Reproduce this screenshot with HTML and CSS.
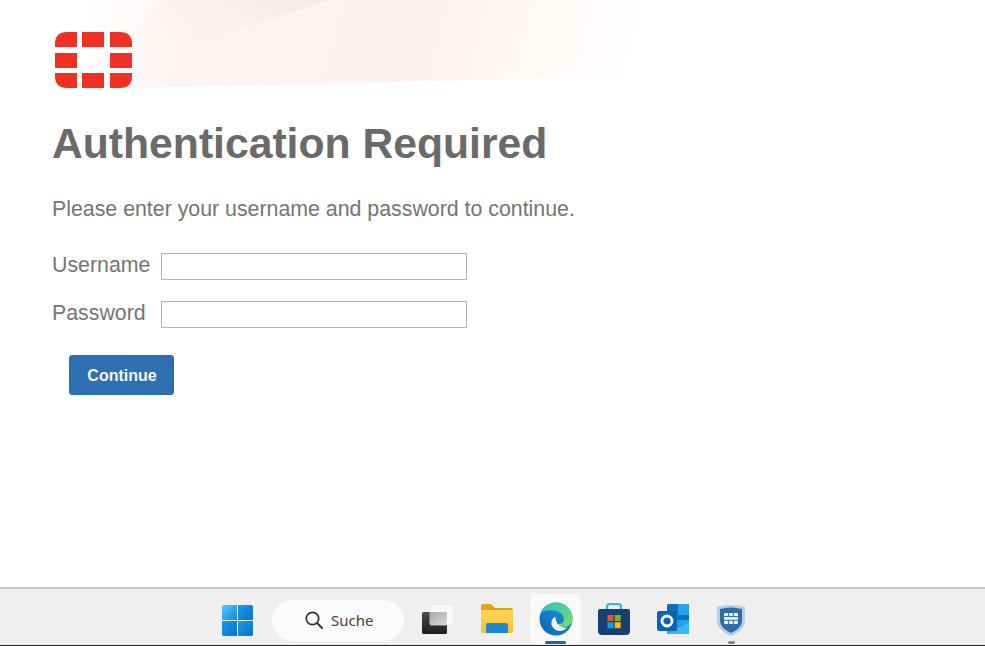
FILE: index.html
```html
<!DOCTYPE html>
<html lang="en">
<head>
<meta charset="utf-8">
<title>Authentication Required</title>
<link rel="stylesheet" href="styles.css">
</head>
<body>
<div class="screen">
  <main class="page">
    <svg class="banner" width="660" height="90" viewBox="0 0 660 90" aria-hidden="true">
      <defs>
        <linearGradient id="fadeA" x1="0" y1="0" x2="1" y2="0.04">
          <stop offset="0" stop-color="#fdf0ee" stop-opacity="0"/>
          <stop offset="0.22" stop-color="#fcf1ef" stop-opacity="0.8"/>
          <stop offset="0.62" stop-color="#fef2f0"/>
          <stop offset="0.82" stop-color="#fff9f7"/>
          <stop offset="1" stop-color="#ffffff"/>
        </linearGradient>
        <linearGradient id="fadeB" x1="0" y1="0.6" x2="1" y2="0">
          <stop offset="0" stop-color="#fdf5f3" stop-opacity="0"/>
          <stop offset="0.55" stop-color="#faf0ee"/>
          <stop offset="1" stop-color="#f7e9e6"/>
        </linearGradient>
      </defs>
      <polygon points="85,0 650,0 650,76 130,88 85,88" fill="url(#fadeA)"/>
      <polygon points="165,0 330,0 135,62 125,36" fill="url(#fadeB)"/>
    </svg>
    <svg class="logo" width="77" height="56" viewBox="0 0 77 56" aria-label="Fortinet logo" role="img">
      <g fill="#ee3124">
        <path d="M0 15V12Q0 0 12 0H22V15Z"/>
        <rect x="27" y="0" width="22" height="15"/>
        <path d="M55 0H65Q77 0 77 12V15H55Z"/>
        <rect x="0" y="21" width="22" height="15"/>
        <rect x="55" y="21" width="22" height="15"/>
        <path d="M0 41H22V56H12Q0 56 0 44Z"/>
        <rect x="27" y="41" width="22" height="15"/>
        <path d="M55 41H77V44Q77 56 65 56H55Z"/>
      </g>
    </svg>
    <h1 class="title">Authentication Required</h1>
    <p class="intro">Please enter your username and password to continue.</p>
    <form class="form">
      <div class="field">
        <label class="label" for="user">Username</label>
        <input class="input" id="user" type="text">
      </div>
      <div class="field">
        <label class="label" for="pass">Password</label>
        <input class="input" id="pass" type="password">
      </div>
      <button class="continue" type="button">Continue</button>
    </form>
  </main>
  <footer class="taskbar">
    <div class="task-icons">
      <svg class="icon" width="31" height="31" viewBox="2 2 28 28" aria-hidden="true">
        <defs>
          <linearGradient id="winA" x1="0" y1="0" x2="1" y2="1"><stop offset="0" stop-color="#52cdfb"/><stop offset="1" stop-color="#1186dc"/></linearGradient>
          <linearGradient id="winB" x1="0" y1="0" x2="1" y2="1"><stop offset="0" stop-color="#1c9be8"/><stop offset="1" stop-color="#0672cc"/></linearGradient>
        </defs>
        <path d="M2 3.500Q2 2 3.500 2H15.500V15.500H2Z" fill="url(#winA)"/>
        <path d="M16.500 2H28.500Q30 2 30 3.500V15.500H16.500Z" fill="url(#winB)"/>
        <path d="M2 16.500H15.500V30H3.500Q2 30 2 28.500Z" fill="url(#winB)"/>
        <path d="M16.500 16.500H30V28.500Q30 30 28.500 30H16.500Z" fill="url(#winB)"/>
      </svg>
      <div class="search">
        <svg width="20" height="20" viewBox="0 0 20 20" aria-hidden="true">
          <circle cx="8.500" cy="8.500" r="6.200" fill="none" stroke="#333" stroke-width="1.700"/>
          <path d="M13 13L18 18" stroke="#333" stroke-width="2" stroke-linecap="round"/>
        </svg>
        <span class="search-text">Suche</span>
      </div>
      <svg class="icon gap-s" width="36" height="36" viewBox="0 1 36 36" aria-hidden="true">
        <defs>
          <linearGradient id="tvA" x1="0" y1="0" x2="0" y2="1"><stop offset="0" stop-color="#4b4b4b"/><stop offset="1" stop-color="#1c1c1c"/></linearGradient>
          <linearGradient id="tvB" x1="0" y1="0" x2="1" y2="1"><stop offset="0" stop-color="#a8a8a8"/><stop offset="1" stop-color="#d8d8d8"/></linearGradient>
        </defs>
        <rect x="3" y="11" width="25" height="22" rx="1.500" fill="url(#tvA)"/>
        <rect x="11" y="3" width="24" height="21" rx="1.500" fill="#f9f9f9" stroke="#e2e2e2" stroke-width="0.800"/>
        <rect x="11" y="11" width="17" height="13" fill="url(#tvB)"/>
      </svg>
      <svg class="icon gap-l" width="36" height="36" viewBox="0 2 36 36" aria-hidden="true">
        <defs>
          <linearGradient id="fold" x1="0" y1="0" x2="0" y2="1"><stop offset="0" stop-color="#ffd75c"/><stop offset="1" stop-color="#f8bd2d"/></linearGradient>
        </defs>
        <path d="M2 6Q2 4 4 4H12L16 8H32Q34 8 34 10V12H2Z" fill="#e6a119"/>
        <path d="M2 10H34V31Q34 33 32 33H4Q2 33 2 31Z" fill="url(#fold)"/>
        <path d="M7 25Q7 23 9 23H27Q29 23 29 25V33H7Z" fill="#1b86d3"/>
      </svg>
      <div class="active-app">
        <svg width="36" height="36" viewBox="0 0 36 36" aria-hidden="true">
          <defs>
            <linearGradient id="edgeA" x1="0" y1="1" x2="1" y2="0"><stop offset="0" stop-color="#0b5fb3"/><stop offset="1" stop-color="#1fa0e0"/></linearGradient>
            <linearGradient id="edgeB" x1="0" y1="0" x2="1" y2="1"><stop offset="0" stop-color="#2bc2c8"/><stop offset="1" stop-color="#7fdc5c"/></linearGradient>
          </defs>
          <circle cx="18" cy="18" r="16.500" fill="url(#edgeA)"/>
          <path d="M3 13C6 4 13 1.500 18 1.500C27 1.500 34.500 8.500 34.500 17.500C34.500 23 30 26 26 26C22.500 26 20 24.500 20 23C27 24 28 15 22 11.500C15 8 5 9 3 13Z" fill="url(#edgeB)"/>
          <path d="M14.500 18C14.500 25 20 29.500 26 28.500C23 33 14 34 11 27C9.500 23.500 11 19 14.500 18Z" fill="#f2f2f2" transform="translate(3 -2)"/>
        </svg>
        <span class="active-mark"></span>
      </div>
      <svg class="icon gap-s" width="36" height="36" viewBox="0 1 36 36" aria-hidden="true">
        <path d="M11 9V6Q11 3 14 3H22Q25 3 25 6V9" fill="none" stroke="#2ab6e8" stroke-width="2.200"/>
        <path d="M2 10Q2 8 4 8H32Q34 8 34 10V30Q34 34 30 34H6Q2 34 2 30Z" fill="#183f73"/>
        <rect x="11.500" y="14" width="6" height="6" fill="#ee4f23"/>
        <rect x="18.700" y="14" width="6" height="6" fill="#7db700"/>
        <rect x="11.500" y="21.200" width="6" height="6" fill="#00a3ee"/>
        <rect x="18.700" y="21.200" width="6" height="6" fill="#ffb900"/>
      </svg>
      <svg class="icon gap-l" width="36" height="36" viewBox="0 0 36 36" aria-hidden="true">
        <rect x="11" y="2" width="22" height="21" rx="1.500" fill="#0f6cbd"/>
        <rect x="22" y="2" width="11" height="11" fill="#27a3e6"/>
        <rect x="11" y="12" width="11" height="11" fill="#1583d8"/>
        <path d="M11 18L33 18V31Q33 32 31.500 32H12.500Q11 32 11 31Z" fill="#1ea1e8"/>
        <path d="M11 32L33 20V31Q33 32 31.500 32Z" fill="#35b8f1"/>
        <rect x="1" y="9" width="20" height="20" rx="2" fill="#0a64b5"/>
        <circle cx="11" cy="19" r="5" fill="none" stroke="#fff" stroke-width="2.800"/>
      </svg>
      <div class="shield-app">
        <svg width="34" height="36" viewBox="0 -2 34 36" aria-hidden="true">
          <path d="M3 3Q17 -1 31 3V17C31 24 24 29 17 32C10 29 3 24 3 17Z" fill="#b9cfe0"/>
          <path d="M6 5Q17 2 28 5V17C28 22 22 27 17 29C12 27 6 22 6 17Z" fill="#2e6da4"/>
          <rect x="10" y="9" width="14" height="11" rx="1" fill="#e8eef4"/>
          <path d="M10 12.600H24M10 16.300H24M14.600 9V12.600M19.300 9V12.600M14.600 16.300V20M19.300 16.300V20" stroke="#2e6da4" stroke-width="1"/>
        </svg>
        <span class="running-mark"></span>
      </div>
    </div>
  </footer>
  <div class="edge"></div>
</div>
</body>
</html>
```

FILE: styles.css
```css
* { box-sizing: border-box; }
html, body { margin: 0; height: 100%; overflow: hidden; background: #fff; }
.screen { height: 646px; display: flex; flex-direction: column; font-family: "Liberation Sans", Arial, sans-serif; color: #6b6b6b; }
.page { position: relative; flex: 1; padding: 32px 0 0 52px; background: #fff; }
.banner { position: absolute; left: 0; top: 0; }
.logo { position: relative; display: block; margin-left: 3px; }
.title { margin: 30px 0 0; font-size: 42.670px; line-height: 50px; font-weight: 700; color: #6a6a6a; }
.intro { margin: 27px 0 0; font-size: 21.330px; line-height: 28px; color: #757575; }
.form { margin-top: 18px; }
.field { display: flex; align-items: center; height: 48px; }
.label { width: 109px; font-size: 21.330px; color: #757575; }
.input { width: 306px; height: 27px; margin: 3px 0 0; padding: 0; border: 1px solid #b0b0b0; background: #fff; }
.continue { display: block; width: 105px; height: 40px; margin: 18px 0 0 17px; padding: 2px 0 0 1px; border: 1px solid #2a6cab; border-radius: 3px; background: #2e6fb2; color: #f4f8fc; font: 700 16px "Liberation Sans", Arial, sans-serif; }
.taskbar { flex: none; height: 58px; padding: 6px 15px 0 0; background: #efefef; border-top: 2px solid #c9c9c9; display: flex; justify-content: center; }
.task-icons { display: flex; align-items: center; height: 50px; }
.icon { display: block; flex: none; }
.gap-s { margin-left: 15px; }
.gap-l { margin-left: 24px; }
.search { display: flex; align-items: center; gap: 7px; width: 132px; height: 41px; margin-left: 19px; padding-left: 32px; border-radius: 21px; background: #fbfbfb; }
.search-text { font: 15px "Noto Sans", sans-serif; color: #444; }
.active-app { position: relative; display: flex; align-items: center; justify-content: center; width: 51px; height: 50px; margin: 0 0 2px 15px; border-radius: 5px; background: #f9f9f9; }
.active-mark { position: absolute; left: 15px; bottom: 0; width: 21px; height: 3px; border-radius: 2px; background: #0f6cbd; }
.shield-app { position: relative; margin-left: 22px; display: flex; align-items: center; }
.running-mark { position: absolute; left: 14px; bottom: -6px; width: 7px; height: 3px; border-radius: 2px; background: #8a8a8a; }
.edge { flex: none; height: 1px; background: #222; }
```
